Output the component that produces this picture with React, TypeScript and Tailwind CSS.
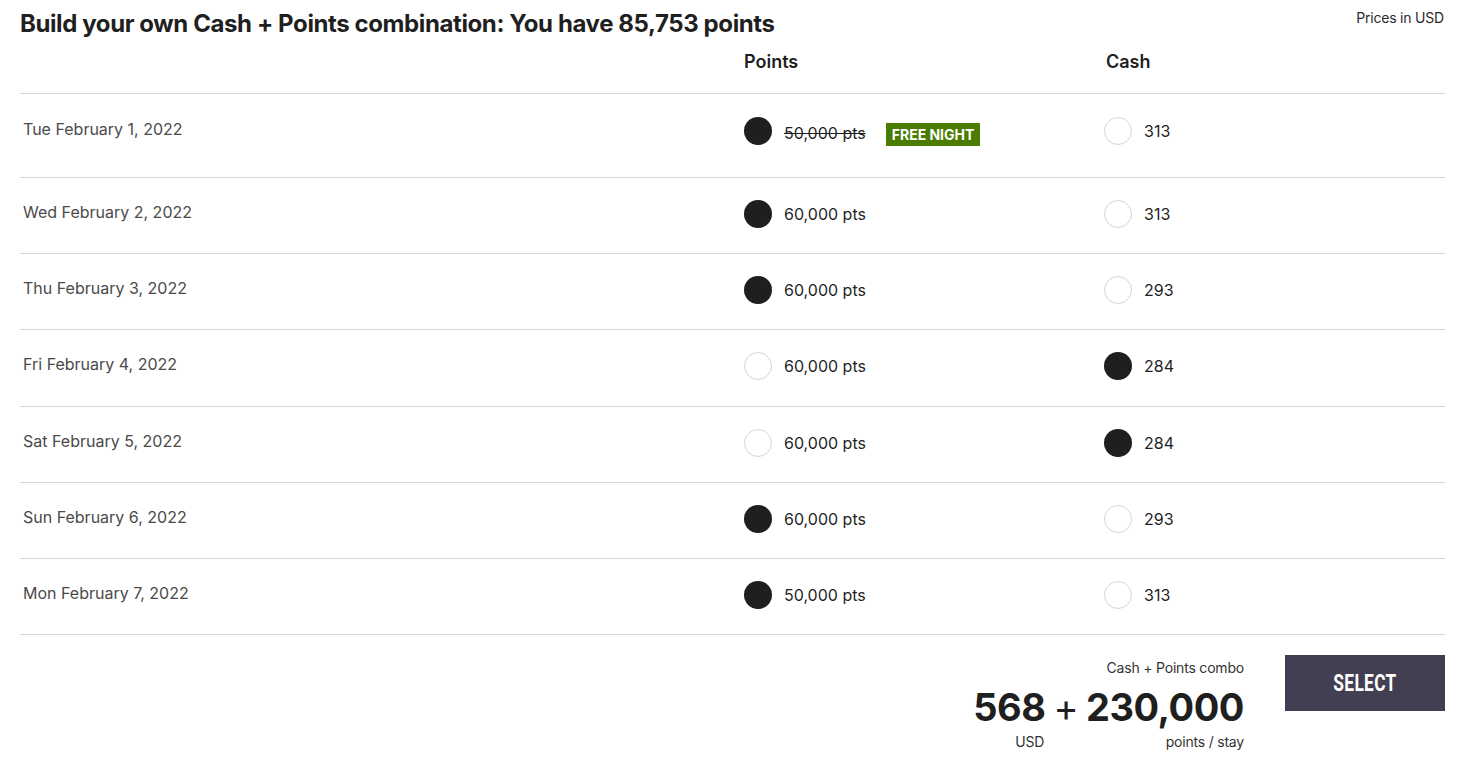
import { FC } from 'react';

type Night = {
  date: string;
  points: string;
  cash: string;
  usePoints: boolean;
  free?: boolean;
};

const nights: Night[] = [
  { date: 'Tue February 1, 2022', points: '50,000 pts', cash: '313', usePoints: true, free: true },
  { date: 'Wed February 2, 2022', points: '60,000 pts', cash: '313', usePoints: true },
  { date: 'Thu February 3, 2022', points: '60,000 pts', cash: '293', usePoints: true },
  { date: 'Fri February 4, 2022', points: '60,000 pts', cash: '284', usePoints: false },
  { date: 'Sat February 5, 2022', points: '60,000 pts', cash: '284', usePoints: false },
  { date: 'Sun February 6, 2022', points: '60,000 pts', cash: '293', usePoints: true },
  { date: 'Mon February 7, 2022', points: '50,000 pts', cash: '313', usePoints: true },
];

const Radio: FC<{ checked: boolean }> = ({ checked }) => (
  <span
    className={
      checked
        ? 'w-[28px] h-[28px] rounded-full bg-[#1f1f1f] shrink-0'
        : 'w-[28px] h-[28px] rounded-full border border-[#d6d6d6] bg-white shrink-0'
    }
  />
);

const App: FC = () => {
  return (
    <div className="min-h-screen bg-white px-[20px] text-[#1f1f1f] font-['Inter','Open_Sans',sans-serif]">
      <div className="flex justify-between items-start pt-[10px]">
        <h2 className="text-[24px] leading-[28px] font-bold tracking-[-0.4px]">
          Build your own Cash + Points combination: You have 85,753 points
        </h2>
        <span className="text-[14px] leading-[16px] mr-[1px] tracking-[-0.2px] text-[#2b2b2b]">Prices in USD</span>
      </div>

      <div className="grid grid-cols-[724px_360px_1fr] pt-[13px] pb-[20px] border-b border-[#d4d4d4]">
        <div />
        <div className="text-[18px] leading-[22px] font-semibold">Points</div>
        <div className="text-[18px] leading-[22px] font-semibold pl-[2px]">Cash</div>
      </div>

      {nights.map((n, i) => (
        <div
          key={n.date}
          className={
            i === 0
              ? 'grid grid-cols-[724px_360px_1fr] pt-[23px] pb-[32px] border-b border-[#d4d4d4]'
              : 'grid grid-cols-[724px_360px_1fr] pt-[22px] pb-[25.2px] border-b border-[#d4d4d4]'
          }
        >
          <div className="pl-[3px] pt-[2px] text-[16px] leading-[20px] text-[#4a4a4a]">{n.date}</div>
          <div className="flex items-center h-[28px]">
            <Radio checked={n.usePoints} />
            <span
              className={
                n.free ? 'ml-[12px] mt-[3px] text-[16px] line-through' : 'ml-[12px] text-[16px]'
              }
            >
              {n.points}
            </span>
            {n.free && (
              <span className="ml-[20px] mt-[6px] bg-[#4b7b00] text-white text-[14px] font-bold px-[6px] h-[23px] leading-[23px]">
                FREE NIGHT
              </span>
            )}
          </div>
          <div className="flex items-center h-[28px]">
            <Radio checked={!n.usePoints} />
            <span className="ml-[12px] text-[16px]">{n.cash}</span>
          </div>
        </div>
      ))}

      <div className="flex justify-end items-start pt-[21px] gap-[41px]">
        <div className="flex flex-col items-end">
          <span className="text-[14px] leading-[18px] text-[#333] tracking-[-0.2px] mt-[3px]">Cash + Points combo</span>
          <div className="flex items-baseline text-[38px] leading-[44px] font-bold tracking-[-0.5px] mt-[8px]">
            <span>568</span>
            <span className="font-normal mx-[8px]">+</span>
            <span>230,000</span>
          </div>
          <div className="flex w-full justify-between text-[14px] leading-[18px] text-[#333] tracking-[-0.2px] mt-[4px]">
            <span className="pl-[42px]">USD</span>
            <span>points / stay</span>
          </div>
        </div>
        <button className="w-[160px] h-[56px] -mt-[1px] bg-[#433f52] text-white flex items-center justify-center">
          <span className="inline-block text-[24px] font-bold font-['Roboto',sans-serif] scale-x-[0.72] tracking-[0.5px]">
            SELECT
          </span>
        </button>
      </div>
    </div>
  );
};

export default App;
